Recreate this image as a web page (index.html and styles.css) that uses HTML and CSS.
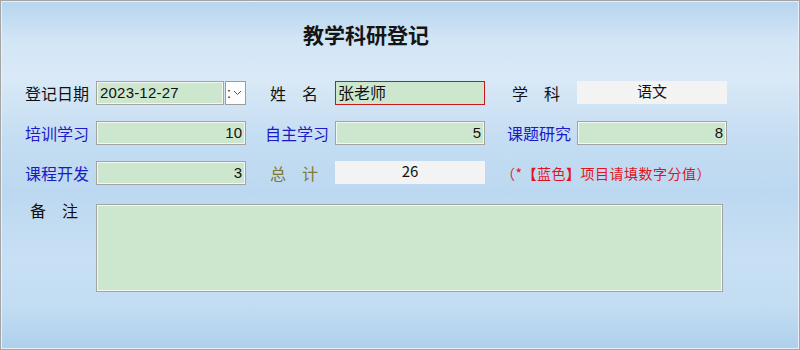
FILE: index.html
```html
<!DOCTYPE html>
<html lang="zh-CN">
<head>
    <meta charset="UTF-8">
    <title>教学科研登记</title>
    <link rel="stylesheet" href="styles.css">
</head>
<body>
    <div class="window">
        <h1 class="title">教学科研登记</h1>
        <div class="form">
            <!-- row 1 -->
            <span class="lbl">登记日期</span>
            <div class="datebox">
                <div class="field date">2023-12-27</div>
                <div class="drop">
                    <span class="colon">:</span>
                    <svg width="9" height="6" viewBox="0 0 9 6"><path d="M1 1 L4.5 4.5 L8 1" fill="none" stroke="#555" stroke-width="1"/></svg>
                </div>
            </div>
            <span class="lbl spaced mid">姓名</span>
            <div class="field name">张老师</div>
            <span class="lbl spaced right">学科</span>
            <div class="field plain center">语文</div>

            <!-- row 2 -->
            <span class="lbl blue">培训学习</span>
            <div class="field num">10</div>
            <span class="lbl blue mid2">自主学习</span>
            <div class="field num">5</div>
            <span class="lbl blue right2">课题研究</span>
            <div class="field num">8</div>

            <!-- row 3 -->
            <span class="lbl blue">课程开发</span>
            <div class="field num">3</div>
            <span class="lbl spaced mid olive">总计</span>
            <div class="field plain center">26</div>
            <span class="note">（*<b>【</b>蓝色<b>】</b>项目请填数字分值）</span>

            <!-- row 4 -->
            <span class="lbl spaced memo-lbl">备注</span>
            <div class="field memo"></div>
        </div>
    </div>
</body>
</html>
```

FILE: styles.css
```css
body{
  margin: 0;
}
.window{
  width: 800px;
  height: 350px;
  box-sizing: border-box;
  border: 1px solid #a4a4a4;
  box-shadow: inset 0 0 0 1px #e8f1f9;
  background: linear-gradient(to bottom,
    #b7d5ee 0%,
    #d3e6f6 12%,
    #d9e9f7 22%,
    #c4ddf2 40%,
    #bcd8f0 55%,
    #c8e0f4 75%,
    #c2dcf2 88%,
    #aed0ec 100%);
  font-family: "Noto Sans CJK SC", sans-serif;
  font-size: 16px;
  color: #111;
}
.title{
  margin: 0;
  padding: 20px 68px 0 0;
  height: 27px;
  line-height: 27px;
  text-align: center;
  font-size: 21px;
  font-weight: bold;
  color: #151515;
}
/* form grid */
.form{
  display: grid;
  grid-template-columns: 71px 150px 89px 150px 92px 150px;
  grid-template-rows: 24px 24px 24px 91px;
  row-gap: 16px;
  margin-top: 33px;
  padding-left: 24px;
  align-items: center;
}
.lbl{
  line-height: 20px;
  white-space: nowrap;
}
.spaced{
  letter-spacing: 16px;
}
.mid{ padding-left: 24px; }
.mid2{ padding-left: 19px; }
.right{ padding-left: 27px; }
.right2{ padding-left: 22px; }
.blue{ color: #1a1ac8; }
.olive{ color: #7d7a35; }
.field{
  height: 24px;
  box-sizing: border-box;
  border: 1px solid #a3a3a3;
  box-shadow: inset 0 0 0 1px #f2f7f2;
  background: #cde7ce;
  line-height: 22px;
  padding: 0 3px;
  font-family: "Liberation Sans", "Noto Sans CJK SC", sans-serif;
  font-size: 15px;
  color: #111;
}
.datebox{
  display: flex;
  height: 24px;
}
.date{
  width: 128px;
  flex: none;
  letter-spacing: 0.2px;
}
.drop{
  width: 22px;
  height: 24px;
  box-sizing: border-box;
  margin-left: 1px;
  border: 1px solid #9c9c9c;
  background: #fdfdfd;
  display: flex;
  align-items: center;
  padding-left: 1px;
  gap: 2px;
  font-size: 14px;
  font-family: "Liberation Sans", sans-serif;
}
.colon{
  line-height: 20px;
}
.name{
  border-color: #c8171d;
  box-shadow: none;
  font-family: "Noto Sans CJK SC", sans-serif;
  font-size: 16px;
  line-height: 21px;
  padding-left: 2px;
}
.num{
  text-align: right;
}
.plain{
  border: none;
  box-shadow: none;
  background: #f3f3f4;
  height: 23px;
  align-self: start;
}
.center{
  text-align: center;
  font-family: "Noto Sans CJK SC", sans-serif;
  font-size: 15px;
  line-height: 20px;
}
.note{
  grid-column: 5 / 7;
  padding-left: 16px;
  color: #e1141c;
  font-size: 14px;
  white-space: nowrap;
  letter-spacing: 0.5px;
}
.note b{
  font-weight: 900;
}
.memo-lbl{
  align-self: start;
  padding-left: 5px;
  line-height: 18px;
}
.memo{
  grid-column: 2 / 7;
  width: 627px;
  height: 88px;
  align-self: start;
  margin-top: 3px;
}
```
